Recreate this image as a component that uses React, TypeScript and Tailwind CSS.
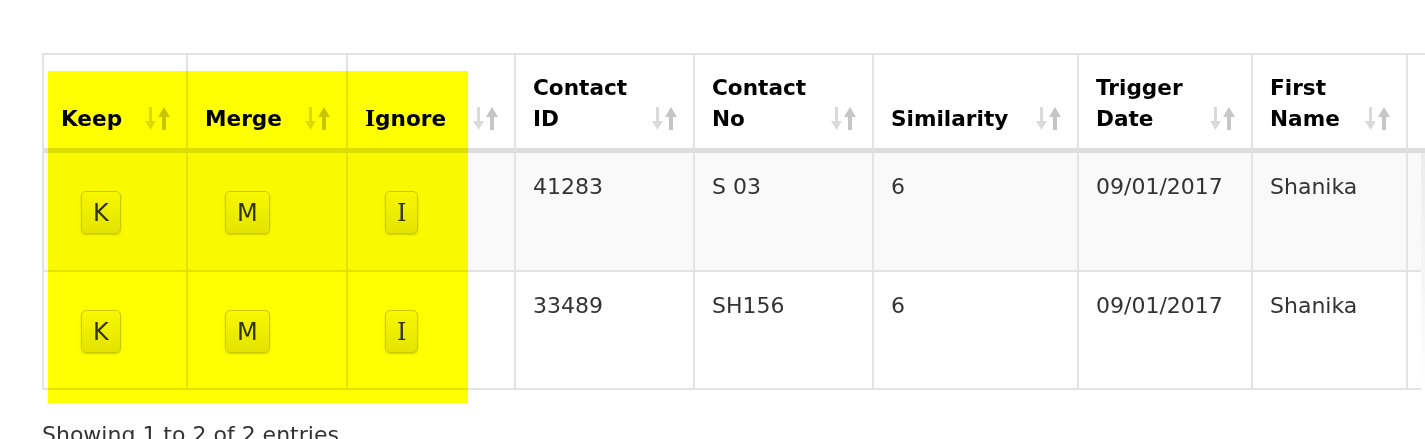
import React from "react";

function SortIcon() {
  return (
    <svg width="26" height="23" viewBox="0 0 26 23" className="shrink-0 mb-[4px]">
      <rect x="4" y="0" width="3" height="16" fill="#dadada" />
      <polygon points="0,14 11,14 5.5,23" fill="#dadada" />
      <rect x="17" y="8" width="4" height="15" fill="#c6c6c6" />
      <polygon points="13,10 25,10 19,0" fill="#c6c6c6" />
    </svg>
  );
}

const serifI = "font-['DejaVu_Serif',serif]";

function Btn({ label }: { label: string }) {
  return (
    <div className="ml-[19px] mt-[19px] inline-flex h-[43px] items-center justify-center rounded-[5px] border border-[#c9c9c9] bg-gradient-to-b from-[#f8f8f8] to-[#e3e3e3] px-[11px] text-[24px] leading-[30px] text-[#333] shadow-[0_1px_2px_rgba(0,0,0,0.18)]">
      {label === "I" ? <span className={serifI}>I</span> : label}
    </div>
  );
}

const headers: React.ReactNode[][] = [
  ["Keep"],
  ["Merge"],
  [
    <>
      <span className={serifI}>I</span>gnore
    </>,
  ],
  ["Contact", "ID"],
  ["Contact", "No"],
  ["Similarity"],
  ["Trigger", "Date"],
  ["First", "Name"],
  [""],
];

const rows = [
  { bg: "bg-[#f9f9f9]", h: "h-[119px]", cells: ["41283", "S 03", "6", "09/01/2017", "Shanika", ""] },
  { bg: "bg-white", h: "h-[118px]", cells: ["33489", "SH156", "6", "09/01/2017", "Shanika", ""] },
];

export default function App() {
  return (
    <div className="relative h-[439px] w-[1425px] overflow-hidden bg-white font-['DejaVu_Sans',Verdana,sans-serif]">
      <div className="ml-[42px] mt-[53px]">
        <div className="grid w-max grid-cols-[144px_160px_168px_179px_179px_205px_174px_155px_170px] border-l-2 border-t-2 border-[#e3e3e3]">
          {headers.map((lines, i) => (
            <div
              key={"h" + i}
              className="flex h-[98px] items-end justify-between border-b-[5px] border-r-2 border-b-[#dddddd] border-r-[#e3e3e3] pb-[14px] pl-[17px] pr-[15px] text-[21.6px] font-bold leading-[31px] text-black"
            >
              <div>
                {lines.map((l, j) => (
                  <div key={j}>{l}</div>
                ))}
              </div>
              <SortIcon />
            </div>
          ))}
          {rows.map((r, ri) => (
            <React.Fragment key={"r" + ri}>
              {["K", "M", "I"].map((b) => (
                <div key={b} className={`${r.h} ${r.bg} border-b-2 border-r-2 border-[#e3e3e3] pl-[18px] pt-[19px]`}>
                  <Btn label={b} />
                </div>
              ))}
              {r.cells.map((c, ci) => (
                <div
                  key={ci}
                  className={`${r.h} ${r.bg} border-b-2 border-r-2 border-[#e3e3e3] pl-[17px] pt-[19px] text-[22px] leading-[30px] text-[#333]`}
                >
                  {c}
                </div>
              ))}
            </React.Fragment>
          ))}
        </div>
        <div className="mt-[30px] text-[22px] leading-[30px] text-[#333]">Showing 1 to 2 of 2 entries</div>
      </div>
      <div className="absolute left-[1421px] top-[153px] h-[237px] w-[4px] bg-gradient-to-b from-[#ececec] to-white" />
      <div className="pointer-events-none absolute left-[48px] top-[71px] h-[332px] w-[420px] bg-[#ffff00] mix-blend-multiply" />
    </div>
  );
}
